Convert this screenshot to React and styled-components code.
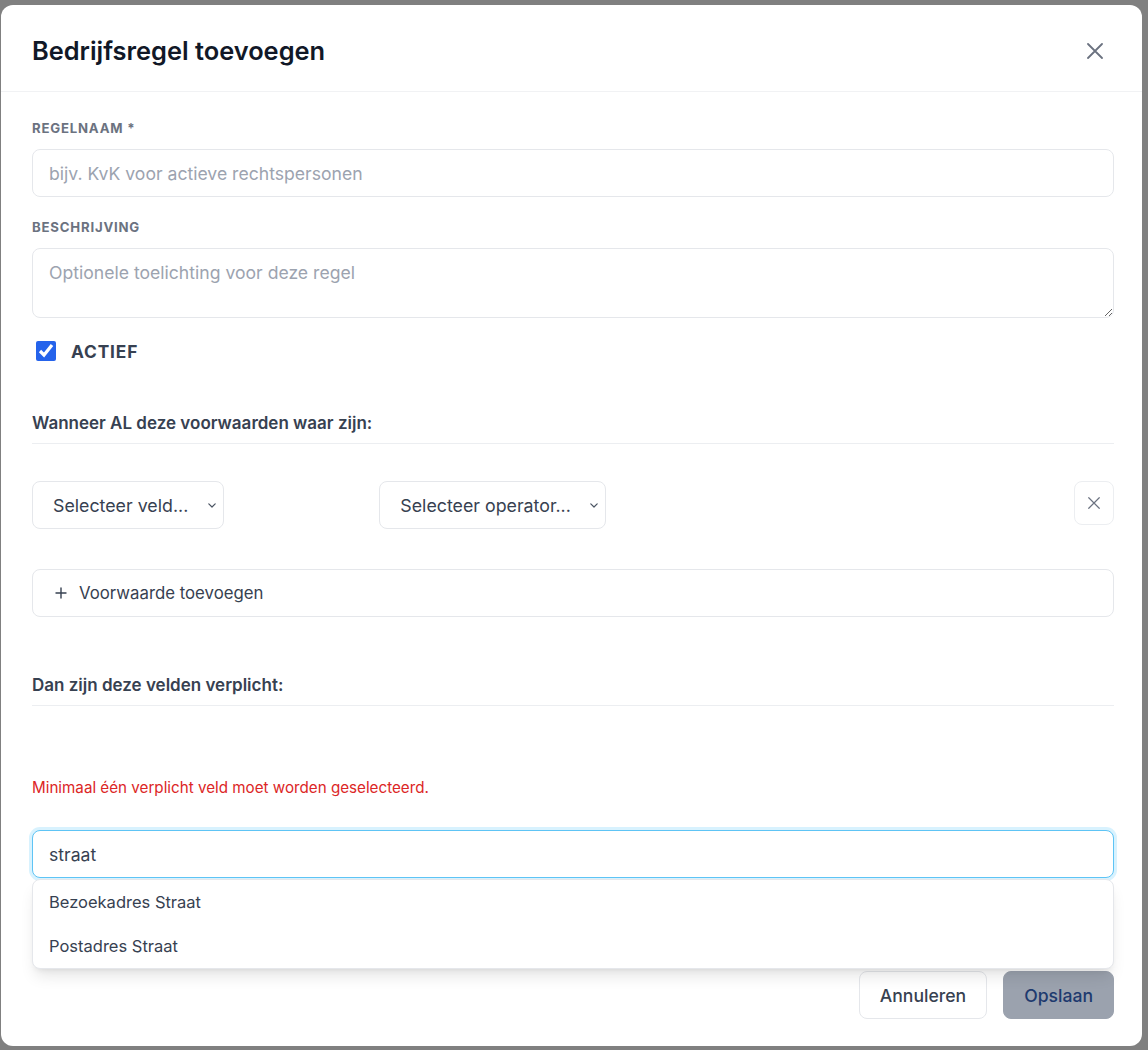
import React from "react";
import styled, { createGlobalStyle } from "styled-components";

const GlobalStyle = createGlobalStyle`
    * {
        box-sizing: border-box;
    }

    body {
        margin: 0;
        background-color: rgb(128, 128, 128);
        font-family: Inter, "Noto Sans", "Liberation Sans", sans-serif;
        color: #374151;
    }
`;

const CloseIcon = ({ size = 16, stroke = 1.8 }) => (
    <svg width={size} height={size} viewBox="0 0 16 16" fill="none">
        <path
            d="M1 1L15 15M15 1L1 15"
            stroke="currentColor"
            strokeWidth={stroke}
            strokeLinecap="round"
        />
    </svg>
);

const PlusIcon = () => (
    <svg width="12" height="12" viewBox="0 0 12 12" fill="none">
        <path d="M6 1V11M1 6H11" stroke="currentColor" strokeWidth="1.4" strokeLinecap="round" />
    </svg>
);

const Chevron = () => (
    <svg width="8" height="5" viewBox="0 0 8 5" fill="none">
        <path d="M0.8 0.8L4 4L7.2 0.8" stroke="currentColor" strokeWidth="1.2" strokeLinecap="round" strokeLinejoin="round" />
    </svg>
);

const conditionFields = [
    { id: "field", placeholder: "Selecteer veld..." },
    { id: "operator", placeholder: "Selecteer operator..." },
];

const suggestions = ["Bezoekadres Straat", "Postadres Straat"];

const App = () => {
    return (
        <>
            <GlobalStyle />
            <Backdrop>
                <Modal>
                    <ModalHeader>
                        <h1>Bedrijfsregel toevoegen</h1>
                        <IconButton aria-label="Sluiten">
                            <CloseIcon />
                        </IconButton>
                    </ModalHeader>

                    <ModalBody>
                        <Field>
                            <Label>Regelnaam *</Label>
                            <TextInput placeholder="bijv. KvK voor actieve rechtspersonen" />
                        </Field>

                        <Field>
                            <Label>Beschrijving</Label>
                            <TextArea placeholder="Optionele toelichting voor deze regel" />
                        </Field>

                        <CheckRow>
                            <input type="checkbox" defaultChecked />
                            <span>Actief</span>
                        </CheckRow>

                        <SectionTitle $top={48}>Wanneer AL deze voorwaarden waar zijn:</SectionTitle>

                        <ConditionRow>
                            {conditionFields.map(field => (
                                <SelectWrap key={field.id}>
                                    <Select defaultValue="">
                                        <option value="">{field.placeholder}</option>
                                    </Select>
                                    <Chevron />
                                </SelectWrap>
                            ))}
                            <span />
                            <RemoveButton aria-label="Verwijderen">
                                <CloseIcon size={12} stroke={1.6} />
                            </RemoveButton>
                        </ConditionRow>

                        <AddButton>
                            <PlusIcon />
                            Voorwaarde toevoegen
                        </AddButton>

                        <SectionTitle $top={56}>Dan zijn deze velden verplicht:</SectionTitle>

                        <ErrorText>Minimaal één verplicht veld moet worden geselecteerd.</ErrorText>

                        <SearchBox>
                            <TextInput $focused defaultValue="straat" />
                            <SuggestionList>
                                {suggestions.map(item => (
                                    <li key={item}>{item}</li>
                                ))}
                            </SuggestionList>
                        </SearchBox>

                        <Footer>
                            <Button>Annuleren</Button>
                            <Button $primary disabled>Opslaan</Button>
                        </Footer>
                    </ModalBody>
                </Modal>
            </Backdrop>
        </>
    );
};

const Backdrop = styled.div`
    height: 100vh;
    padding: 5px 6px 4px 1px;
`;

const Modal = styled.div`
    height: 100%;
    display: flex;
    flex-direction: column;
    background-color: #fff;
    border-radius: 12px;
    overflow: hidden;
`;

const ModalHeader = styled.header`
    display: flex;
    align-items: center;
    justify-content: space-between;
    padding: 31px 39px 25px 31px;
    border-bottom: 1px solid #f1f2f4;

    h1 {
        margin: 0;
        font-size: 25.4px;
        line-height: 30px;
        font-weight: 600;
        color: #111827;
    }
`;

const IconButton = styled.button`
    display: flex;
    padding: 0;
    border: 0;
    background: none;
    color: #6b7280;
    cursor: pointer;
`;

const ModalBody = styled.div`
    flex: 1;
    display: flex;
    flex-direction: column;
    padding: 27px 28px 27px 31px;
`;

const Field = styled.div`
    display: flex;
    flex-direction: column;
    gap: 12px;
    margin-bottom: 21px;
`;

const Label = styled.label`
    font-size: 13.2px;
    line-height: 18px;
    font-weight: 700;
    letter-spacing: 0.06em;
    text-transform: uppercase;
    color: #6b7280;
`;

const TextInput = styled.input`
    width: 100%;
    height: 48px;
    padding: 0 16px;
    border: 1px solid ${p => (p.$focused ? "#5ec4f5" : "#e5e7eb")};
    border-radius: 8px;
    box-shadow: ${p => (p.$focused ? "0 0 0 3px rgba(125, 211, 252, 0.3)" : "none")};
    font-family: inherit;
    font-size: 17.6px;
    color: #374151;
    outline: none;

    &::placeholder {
        color: #9ca3af;
    }
`;

const TextArea = styled.textarea`
    width: 100%;
    height: 70px;
    padding: 13px 16px;
    border: 1px solid #e5e7eb;
    border-radius: 8px;
    font-family: inherit;
    font-size: 17.6px;
    line-height: 22px;
    color: #374151;
    outline: none;

    &::placeholder {
        color: #9ca3af;
    }
`;

const CheckRow = styled.label`
    display: flex;
    align-items: center;
    gap: 15px;
    height: 24px;
    font-size: 17.3px;
    font-weight: 700;
    letter-spacing: 0.05em;
    text-transform: uppercase;
    color: #374151;

    input {
        width: 20px;
        height: 20px;
        margin: 0 0 0 4px;
        accent-color: #2563eb;
    }
`;

const SectionTitle = styled.h3`
    margin: ${p => p.$top}px 0 0;
    padding-bottom: 8px;
    border-bottom: 1px solid #eceef1;
    font-size: 17px;
    line-height: 24px;
    font-weight: 600;
    color: #374151;
`;

const ConditionRow = styled.div`
    display: grid;
    grid-template-columns: 1fr 1fr 1fr auto;
    gap: 8px;
    align-items: start;
    margin-top: 37px;
`;

const SelectWrap = styled.div`
    position: relative;
    justify-self: start;
    display: flex;

    svg {
        position: absolute;
        right: 8px;
        top: 22px;
        color: #4b5563;
        pointer-events: none;
    }
`;

const Select = styled.select`
    appearance: none;
    height: 48px;
    padding: 0 34px 0 20px;
    border: 1px solid #e5e7eb;
    border-radius: 8px;
    background-color: #fff;
    font-family: inherit;
    font-size: 17.8px;
    color: #374151;
    outline: none;
`;

const RemoveButton = styled.button`
    display: flex;
    align-items: center;
    justify-content: center;
    width: 40px;
    height: 44px;
    border: 1px solid #eceef1;
    border-radius: 8px;
    background-color: #fff;
    color: #6b7280;
`;

const AddButton = styled.button`
    display: flex;
    align-items: center;
    gap: 12px;
    height: 48px;
    margin-top: 40px;
    padding: 0 22px;
    border: 1px solid #e5e7eb;
    border-radius: 8px;
    background-color: #fff;
    font-family: inherit;
    font-size: 16.8px;
    font-weight: 400;
    color: #374151;
    text-align: left;
`;

const ErrorText = styled.p`
    margin: 72px 0 0;
    font-size: 15.2px;
    line-height: 20px;
    color: #dc2626;
`;

const SearchBox = styled.div`
    position: relative;
    margin-top: 32px;
`;

const SuggestionList = styled.ul`
    position: absolute;
    top: calc(100% + 1px);
    left: 0;
    right: 0;
    z-index: 2;
    margin: 0;
    padding: 0;
    list-style: none;
    background-color: #fff;
    border: 1px solid #e5e7eb;
    border-radius: 8px;
    box-shadow: 0 10px 15px -3px rgba(0, 0, 0, 0.1), 0 4px 6px -4px rgba(0, 0, 0, 0.1);

    li {
        height: 44px;
        display: flex;
        align-items: center;
        padding: 0 16px;
        font-size: 16.5px;
        color: #374151;
    }
`;

const Footer = styled.div`
    display: flex;
    justify-content: flex-end;
    gap: 16px;
    margin-top: auto;
`;

const Button = styled.button`
    height: 48px;
    padding: 0 20px;
    border: 1px solid ${p => (p.$primary ? "#9ba2ae" : "#e5e7eb")};
    border-radius: 8px;
    background-color: ${p => (p.$primary ? "#9ba2ae" : "#fff")};
    font-family: inherit;
    font-size: 17.6px;
    font-weight: 500;
    color: ${p => (p.$primary ? "#1e3a6e" : "#374151")};
`;

export default App;
